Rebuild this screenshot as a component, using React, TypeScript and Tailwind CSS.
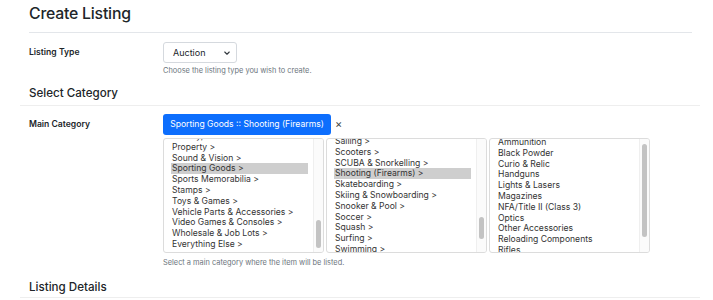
const font = { fontFamily: "Inter, 'Liberation Sans', sans-serif" };

const mainCats = [
  "Pottery, Porcelain & Glass >",
  "Property >",
  "Sound & Vision >",
  "Sporting Goods >",
  "Sports Memorabilia >",
  "Stamps >",
  "Toys & Games >",
  "Vehicle Parts & Accessories >",
  "Video Games & Consoles >",
  "Wholesale & Job Lots >",
  "Everything Else >",
];

const sportCats = [
  "Sailing >",
  "Scooters >",
  "SCUBA & Snorkelling >",
  "Shooting (Firearms) >",
  "Skateboarding >",
  "Skiing & Snowboarding >",
  "Snooker & Pool >",
  "Soccer >",
  "Squash >",
  "Surfing >",
  "Swimming >",
];

const shootingCats = [
  "Ammunition",
  "Black Powder",
  "Curio & Relic",
  "Handguns",
  "Lights & Lasers",
  "Magazines",
  "NFA/Title II (Class 3)",
  "Optics",
  "Other Accessories",
  "Reloading Components",
  "Rifles",
];

type ListBoxProps = {
  items: string[];
  selected?: string;
  offset: number;
  thumbTop: number;
  thumbHeight: number;
};

function ListBox({ items, selected, offset, thumbTop, thumbHeight }: ListBoxProps) {
  return (
    <div className="relative h-[115px] w-[161px] overflow-hidden rounded-[3px] border border-[#dcdcdc] bg-white">
      <ul className="pl-[7px] pr-[15px]" style={{ marginTop: offset }}>
        {items.map((item) => (
          <li
            key={item}
            className={`h-[10.8px] whitespace-nowrap pl-[1px] text-[8.6px] leading-[10.8px] text-[#333333] ${
              item === selected ? "bg-[#cecece]" : ""
            }`}
          >
            {item}
          </li>
        ))}
      </ul>
      {/* scrollbar */}
      <div className="absolute bottom-0 right-0 top-0 w-[10px] border-l border-[#efefef] bg-[#fbfbfb]">
        <div
          className="absolute left-[2px] w-[5px] rounded-full bg-[#c3c3c3]"
          style={{ top: thumbTop, height: thumbHeight }}
        />
      </div>
    </div>
  );
}

export default function App() {
  return (
    <div className="h-[300px] w-[713px] overflow-hidden bg-white text-[#212529]" style={font}>
      {/* Title */}
      <div className="mx-[29px] h-[33px] w-[663px] border-b border-[#e3e6ea]">
        <h1 className="pt-[3px] text-[15.8px] font-medium leading-[22px] tracking-[-0.2px] text-[#212529]">
          Create Listing
        </h1>
      </div>

      {/* Listing type */}
      <div className="ml-[29px] mt-[9px] flex">
        <div className="w-[134px] pt-[4px] text-[8.6px] font-semibold leading-[12px]">Listing Type</div>
        <div>
          <div className="flex h-[21px] w-[74px] items-center justify-between rounded-[3px] border border-[#d5d9de] pl-[9px] pr-[4px]">
            <span className="text-[9px] text-[#212529]">Auction</span>
            <svg width="8" height="8" viewBox="0 0 16 16" className="mr-[1px]">
              <path d="M3.5 6 L8 10.5 L12.5 6" fill="none" stroke="#343a40" strokeWidth="2.2" strokeLinecap="round" strokeLinejoin="round" />
            </svg>
          </div>
          <p className="mt-[3px] text-[7.4px] leading-[10px] text-[#6c757d]">
            Choose the listing type you wish to create.
          </p>
        </div>
      </div>

      {/* Select Category */}
      <div className="mx-[20px] mt-[9px] w-[680px] border-b border-[#eeeeee] pb-[4px] pl-[9px]">
        <h2 className="text-[11.6px] font-medium leading-[16px]">Select Category</h2>
      </div>

      <div className="ml-[29px] mt-[8px] flex">
        <div className="w-[134px] pt-[4px] text-[8.6px] font-semibold leading-[12px]">Main Category</div>
        <div>
          <div className="flex items-center">
            <span className="flex h-[21px] w-[168px] items-center justify-center rounded-[3px] bg-[#0d6efd] text-[8.6px] text-white">
              Sporting Goods :: Shooting (Firearms)
            </span>
            <span className="ml-[4px] text-[11px] leading-none text-[#444]">×</span>
          </div>
          <div className="mt-[3px] flex gap-[2px]">
            <ListBox items={mainCats} selected="Sporting Goods >" offset={-8} thumbTop={81} thumbHeight={28} />
            <ListBox items={sportCats} selected="Shooting (Firearms) >" offset={-3} thumbTop={78} thumbHeight={22} />
            <ListBox items={shootingCats} offset={-2} thumbTop={5} thumbHeight={93} />
          </div>
          <p className="mt-[5px] text-[7.4px] leading-[10px] text-[#6c757d]">
            Select a main category where the item will be listed.
          </p>
        </div>
      </div>

      {/* Listing details */}
      <div className="mx-[20px] mt-[11px] w-[680px] border-b border-[#eeeeee] pb-[2px] pl-[9px]">
        <h2 className="text-[11.6px] font-medium leading-[16px]">Listing Details</h2>
      </div>
    </div>
  );
}
